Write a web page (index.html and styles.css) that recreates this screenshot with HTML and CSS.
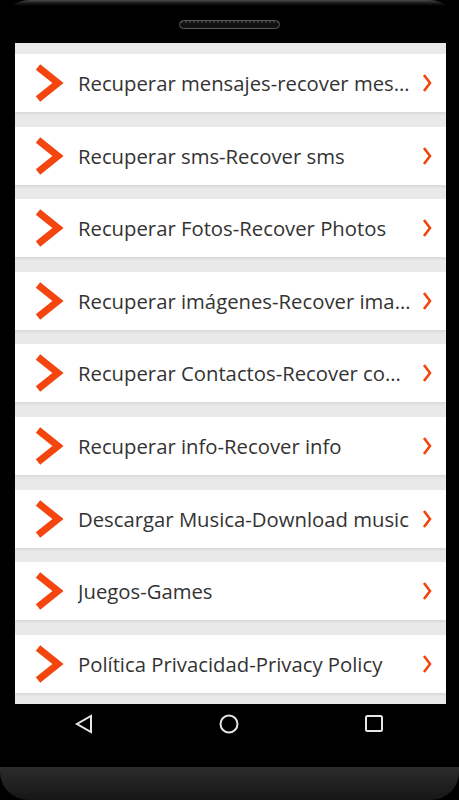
FILE: index.html
```html
<!DOCTYPE html>
<html>
<head>
<meta charset="utf-8">
<link rel="stylesheet" href="styles.css">
</head>
<body>
<div class="phone">
  <div class="top-bezel"><div class="speaker"></div></div>
  <div class="screen">
    <div class="row"><svg class="big" viewBox="0 0 30 40" width="30" height="40"><polyline points="4,4 24,20 4,36"/></svg><span class="label">Recuperar mensajes-recover messages</span><svg class="small" viewBox="0 0 10 20" width="10" height="20"><polyline points="2,2 8,10 2,18"/></svg></div>
    <div class="row"><svg class="big" viewBox="0 0 30 40" width="30" height="40"><polyline points="4,4 24,20 4,36"/></svg><span class="label">Recuperar sms-Recover sms</span><svg class="small" viewBox="0 0 10 20" width="10" height="20"><polyline points="2,2 8,10 2,18"/></svg></div>
    <div class="row"><svg class="big" viewBox="0 0 30 40" width="30" height="40"><polyline points="4,4 24,20 4,36"/></svg><span class="label">Recuperar Fotos-Recover Photos</span><svg class="small" viewBox="0 0 10 20" width="10" height="20"><polyline points="2,2 8,10 2,18"/></svg></div>
    <div class="row"><svg class="big" viewBox="0 0 30 40" width="30" height="40"><polyline points="4,4 24,20 4,36"/></svg><span class="label">Recuperar imágenes-Recover images</span><svg class="small" viewBox="0 0 10 20" width="10" height="20"><polyline points="2,2 8,10 2,18"/></svg></div>
    <div class="row"><svg class="big" viewBox="0 0 30 40" width="30" height="40"><polyline points="4,4 24,20 4,36"/></svg><span class="label">Recuperar Contactos-Recover contacts</span><svg class="small" viewBox="0 0 10 20" width="10" height="20"><polyline points="2,2 8,10 2,18"/></svg></div>
    <div class="row"><svg class="big" viewBox="0 0 30 40" width="30" height="40"><polyline points="4,4 24,20 4,36"/></svg><span class="label">Recuperar info-Recover info</span><svg class="small" viewBox="0 0 10 20" width="10" height="20"><polyline points="2,2 8,10 2,18"/></svg></div>
    <div class="row"><svg class="big" viewBox="0 0 30 40" width="30" height="40"><polyline points="4,4 24,20 4,36"/></svg><span class="label">Descargar Musica-Download music</span><svg class="small" viewBox="0 0 10 20" width="10" height="20"><polyline points="2,2 8,10 2,18"/></svg></div>
    <div class="row"><svg class="big" viewBox="0 0 30 40" width="30" height="40"><polyline points="4,4 24,20 4,36"/></svg><span class="label">Juegos-Games</span><svg class="small" viewBox="0 0 10 20" width="10" height="20"><polyline points="2,2 8,10 2,18"/></svg></div>
    <div class="row"><svg class="big" viewBox="0 0 30 40" width="30" height="40"><polyline points="4,4 24,20 4,36"/></svg><span class="label">Política Privacidad-Privacy Policy</span><svg class="small" viewBox="0 0 10 20" width="10" height="20"><polyline points="2,2 8,10 2,18"/></svg></div>
  </div>
  <div class="nav">
    <svg class="nav-icon" viewBox="0 0 20 20" width="20" height="20"><polygon points="17,2 17,18 3,10"/></svg>
    <svg class="nav-icon" viewBox="0 0 20 20" width="20" height="20"><circle cx="10" cy="10" r="8.5"/></svg>
    <svg class="nav-icon" viewBox="0 0 20 20" width="20" height="20"><rect x="2" y="2" width="16" height="15" rx="1.5"/></svg>
  </div>
  <div class="chin"></div>
  <div class="bottom-bezel"></div>
</div>
</body>
</html>
```
FILE: styles.css
```css
html, body {
  margin: 0;
  padding: 0;
  background: #000;
}
.phone {
  width: 459px;
  height: 800px;
  display: flex;
  flex-direction: column;
  background: #000;
  overflow: hidden;
}
.top-bezel {
  height: 43px;
  box-sizing: border-box;
  padding-top: 20px;
  border-radius: 30px 30px 0 0;
  background: linear-gradient(#4a4a4a 0, #1a1a1a 3px, #000 6px);
  display: flex;
  justify-content: center;
}
.speaker {
  width: 99px;
  height: 7px;
  border: 1px solid #5a5a5a;
  border-radius: 5px;
  background-color: #111;
  background-image: radial-gradient(circle at 2px 1px, #3a3a3a 1px, transparent 1.5px);
  background-size: 4px 7px;
}
.screen {
  height: 661px;
  margin: 0 13px 0 15px;
  background: #e9e9e9;
  box-sizing: border-box;
  padding-top: 11px;
  overflow: hidden;
  display: flex;
  flex-direction: column;
  gap: 14.6px;
  flex-shrink: 0;
}
.row {
  flex-shrink: 0;
  height: 58px;
  background: #fff;
  box-shadow: 0 2px 2px #d9d9d9;
  display: flex;
  align-items: center;
  padding: 0 14px 0 19px;
}
.big {
  flex-shrink: 0;
  fill: none;
  stroke: #f4450f;
  stroke-width: 7;
  stroke-linejoin: miter;
  stroke-linecap: butt;
}
.label {
  flex: 1;
  min-width: 0;
  margin-left: 14px;
  font-family: "Open Sans", sans-serif;
  font-size: 20.3px;
  color: #333;
  white-space: nowrap;
  overflow: hidden;
  text-overflow: ellipsis;
}
.small {
  flex-shrink: 0;
  margin-left: 9px;
  fill: none;
  stroke: #f4450f;
  stroke-width: 2.6;
  stroke-linejoin: miter;
}
.nav {
  height: 40px;
  flex-shrink: 0;
  display: flex;
  align-items: center;
  justify-content: space-between;
  padding: 0 75px 0 74px;
}
.nav-icon {
  fill: none;
  stroke: #e6e6e6;
  stroke-width: 2;
}
.chin {
  height: 23px;
  flex-shrink: 0;
}
.bottom-bezel {
  flex: 1;
  border-radius: 0 0 28px 28px;
  background: linear-gradient(#2c2c2c, #161616);
}
```
